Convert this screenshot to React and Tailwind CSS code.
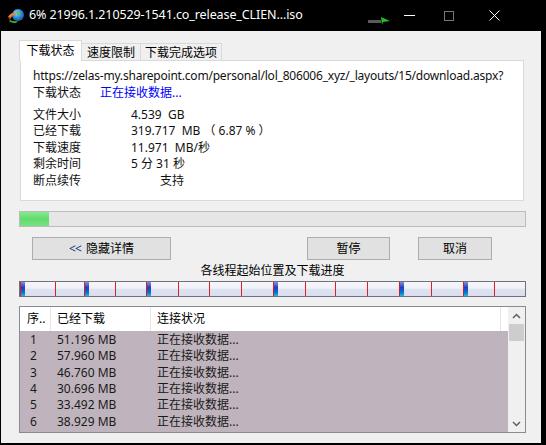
import React from "react";

const font = { fontFamily: '"Noto Sans", "Noto Sans CJK SC", sans-serif' };

const rows = [
  ["1", "51.196  MB"],
  ["2", "57.960  MB"],
  ["3", "46.760  MB"],
  ["4", "30.696  MB"],
  ["5", "33.492  MB"],
  ["6", "38.929  MB"],
];

const redLines = [55, 115, 178, 209, 241, 305, 335, 367, 431, 494];
const blueMarks = [1, 65, 127, 254, 380, 444];

function IdmIcon() {
  return (
    <svg width="18" height="16" viewBox="0 0 18 16">
      <defs>
        <radialGradient id="globe" cx="0.4" cy="0.35" r="0.7">
          <stop offset="0" stopColor="#9fe0ff" />
          <stop offset="0.5" stopColor="#2f8fe0" />
          <stop offset="1" stopColor="#1a4fa0" />
        </radialGradient>
      </defs>
      <circle cx="11" cy="7" r="6" fill="url(#globe)" />
      <path d="M9 4 Q11 3 13 5 Q12 8 10 7 Z" fill="#5cc040" />
      <path d="M1 9 Q4 4 9 5 L8 7 Q5 7 4 10 Z" fill="#f08020" />
      <path d="M3 12 Q6 14 11 13 L9 15 Q4 15 2 13 Z" fill="#40b030" />
      <path d="M1 9 L4 10 L3 12 Z" fill="#e03020" />
    </svg>
  );
}

function ThreadBar() {
  return (
    <svg width="507" height="16" className="block">
      <defs>
        <linearGradient id="tb" x1="0" y1="0" x2="0" y2="1">
          <stop offset="0" stopColor="#f4f6fb" />
          <stop offset="0.45" stopColor="#f0f2f8" />
          <stop offset="0.5" stopColor="#dfe3f0" />
          <stop offset="1" stopColor="#d8dcec" />
        </linearGradient>
        <linearGradient id="bm" x1="0" y1="0" x2="0" y2="1">
          <stop offset="0" stopColor="#8090e0" />
          <stop offset="0.4" stopColor="#2040c0" />
          <stop offset="0.75" stopColor="#1070d0" />
          <stop offset="1" stopColor="#10c0e0" />
        </linearGradient>
      </defs>
      <rect x="0.5" y="0.5" width="506" height="15" fill="url(#tb)" stroke="#70707e" />
      {redLines.map((x) => (
        <rect key={x} x={x - 19} y="1" width="1" height="14" fill="#e02020" />
      ))}
      {blueMarks.map((x) => (
        <g key={x}>
          <rect x={x} y="1" width="5" height="14" fill="url(#bm)" />
          <rect x={x} y="1" width="1" height="14" fill="#d02020" />
        </g>
      ))}
    </svg>
  );
}

export default function App() {
  return (
    <div className="w-[546px] h-[445px] bg-black overflow-hidden text-[12px] text-black" style={font}>
      {/* title bar */}
      <div className="h-[31px] flex items-center text-white relative">
        <div className="pl-[7px] pr-[4px] pt-[1px]">
          <IdmIcon />
        </div>
        <span className="text-[12.5px] tracking-[-0.1px]">6% 21996.1.210529-1541.co_release_CLIEN...iso</span>
        <div className="absolute left-[368px] top-[17px] flex items-center">
          <div className="w-[13px] h-[3px] bg-[#5a5a5a]" />
          <svg width="9" height="8" viewBox="0 0 9 8">
            <path d="M0 0 L9 4 L2 5 L1 8 Z" fill="#20c020" />
          </svg>
        </div>
        <div className="absolute left-[404px] top-[15px] w-[11px] h-[1px] bg-white" />
        <div className="absolute left-[444px] top-[11px] w-[10px] h-[10px] border border-[#777]" />
        <svg className="absolute left-[489px] top-[10px]" width="11" height="11" viewBox="0 0 11 11">
          <path d="M0.5 0.5 L10.5 10.5 M10.5 0.5 L0.5 10.5" stroke="white" strokeWidth="1" />
        </svg>
      </div>

      {/* body */}
      <div className="ml-[1px] w-[540px] h-[412px] bg-[#f0f0f0] pl-[18px] pt-[9px]">
        {/* tabs */}
        <div className="flex items-end h-[21px] relative z-10">
          <div className="h-[21px] w-[63px] bg-white border border-b-0 border-[#d9d9d9] flex items-center justify-center">
            下载状态
          </div>
          <div className="h-[18px] w-[59px] border border-l-0 border-b-0 border-[#d9d9d9] flex items-center justify-center">
            速度限制
          </div>
          <div className="h-[18px] w-[81px] border border-l-0 border-b-0 border-[#d9d9d9] flex items-center justify-center">
            下载完成选项
          </div>
        </div>
        <div className="-mt-[1px] ml-[1px] w-[504px] h-[141px] bg-white border border-[#d9d9d9] pl-[12px] pt-[6px] text-[#111]">
          <div className="h-[17px] whitespace-nowrap overflow-hidden w-[472px] tracking-[-0.2px]">
            https://zelas-my.sharepoint.com/personal/lol_806006_xyz/_layouts/15/download.aspx?
          </div>
          <div className="h-[17px] flex items-center">
            <span className="w-[67px]">下载状态</span>
            <span className="text-[#0000ff]">正在接收数据...</span>
          </div>
          <div className="mt-[6px] flex flex-col leading-[16.4px]">
            <div className="flex"><span className="w-[98px]">文件大小</span><span>4.539&nbsp;&nbsp;GB</span></div>
            <div className="flex"><span className="w-[98px]">已经下载</span><span>319.717&nbsp;&nbsp;MB&nbsp;（ 6.87 % ）</span></div>
            <div className="flex"><span className="w-[98px]">下载速度</span><span>11.971&nbsp;&nbsp;MB/秒</span></div>
            <div className="flex"><span className="w-[98px]">剩余时间</span><span>5 分 31 秒</span></div>
            <div className="flex"><span className="w-[127px]">断点续传</span><span>支持</span></div>
          </div>
        </div>

        {/* progress */}
        <div className="mt-[10px] w-[507px] h-[16px] border border-[#bcbcbc] bg-[#e6e6e6] p-0">
          <div className="w-[29px] h-full bg-gradient-to-b from-[#86ea90] via-[#62da6c] to-[#78e282]" />
        </div>

        {/* buttons */}
        <div className="mt-[10px] flex h-[23px]">
          <button className="ml-[13px] w-[139px] h-[23px] bg-[#e1e1e1] border border-[#adadad] flex items-center justify-center">
            <span className="tracking-[-1px] mr-[2px] text-[#203080]">&lt;&lt;</span>&nbsp;隐藏详情
          </button>
          <button className="ml-[136px] w-[83px] h-[23px] bg-[#e1e1e1] border border-[#adadad]">暂停</button>
          <button className="ml-[28px] w-[74px] h-[23px] bg-[#e1e1e1] border border-[#adadad]">取消</button>
        </div>

        <div className="w-[507px] h-[21px] flex items-center justify-center pt-[1px]">各线程起始位置及下载进度</div>
        <ThreadBar />

        {/* list */}
        <div className="mt-[9px] w-[507px] h-[127px] border border-[#8a8a92] flex bg-white">
          <div className="w-[488px] flex flex-col">
            <div className="h-[24px] flex items-center bg-white shrink-0">
              <div className="w-[31px] pl-[7px] border-r border-[#e5e5e5] h-full flex items-center">序..</div>
              <div className="w-[100px] pl-[6px] border-r border-[#e5e5e5] h-full flex items-center">已经下载</div>
              <div className="w-[350px] pl-[6px] border-r border-[#e5e5e5] h-full flex items-center">连接状况</div>
            </div>
            <div className="flex-1 bg-[#bfb4bd] overflow-hidden pt-[1px]">
              {rows.map(([n, s]) => (
                <div key={n} className="h-[16.3px] flex items-center text-[#1a1a1a]">
                  <span className="w-[37px] pl-[10px]">{n}</span>
                  <span className="w-[100px]">{s}</span>
                  <span>正在接收数据...</span>
                </div>
              ))}
            </div>
          </div>
          <div className="w-[17px] bg-[#f0f0f0] flex flex-col items-center">
            <svg className="mt-[6px]" width="9" height="6" viewBox="0 0 9 6">
              <path d="M1 5 L4.5 1.5 L8 5" stroke="#606060" strokeWidth="1.5" fill="none" />
            </svg>
            <div className="mt-[5px] w-[15px] h-[17px] bg-[#cdcdcd]" />
            <div className="flex-1" />
            <svg className="mb-[5px]" width="9" height="6" viewBox="0 0 9 6">
              <path d="M1 1 L4.5 4.5 L8 1" stroke="#606060" strokeWidth="1.5" fill="none" />
            </svg>
          </div>
        </div>
      </div>
    </div>
  );
}
